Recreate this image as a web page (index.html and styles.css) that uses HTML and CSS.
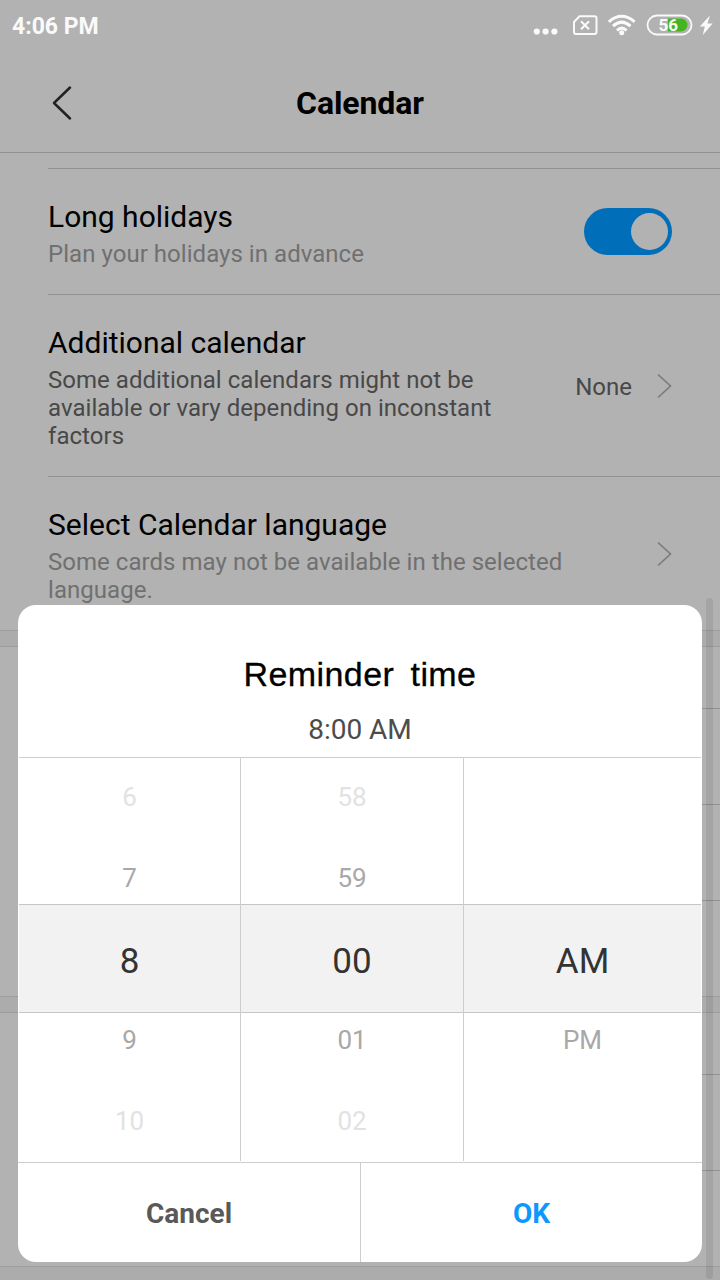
FILE: index.html
```html
<!DOCTYPE html>
<html lang="en">
<head>
<meta charset="utf-8">
<title>Calendar</title>
<link rel="stylesheet" href="styles.css">
</head>
<body>
<div class="screen">
  <header class="status">
    <span class="clock">4:06 PM</span>
    <svg class="status-icons" width="190" height="50" viewBox="0 0 190 50">
      <g fill="#fafafa">
        <circle cx="6.800" cy="31.500" r="3.100"/><circle cx="15.600" cy="31.500" r="3.100"/><circle cx="24.400" cy="31.500" r="3.100"/>
      </g>
      <g fill="none" stroke="#fafafa" stroke-width="2">
        <path d="M49.500 16.200H64.500q2 0 2 2V32q0 2-2 2H46q-2 0-2-2V22Z" stroke-linejoin="round"/>
        <path d="M51 21.200l8 8M59 21.200l-8 8"/>
      </g>
      <g fill="none" stroke="#fafafa" stroke-width="3">
        <path d="M78.800 21.800Q91.700 10.800 104.600 21.800"/>
        <path d="M83 26.200Q91.700 18 100.500 26.200"/>
        <path d="M87 30.500Q91.700 25.800 96.500 30.500"/>
      </g>
      <circle cx="91.700" cy="32.800" r="2.500" fill="#fafafa"/>
      <path d="M138 18.500h13a6.500 6.500 0 0 1 0 13h-13z" fill="#44b520"/>
      <rect x="117.500" y="15.500" width="44" height="19" rx="9.500" fill="none" stroke="#fafafa" stroke-width="1.800"/>
      <text class="battery-text" x="128.500" y="30.800" textLength="19.500" lengthAdjust="spacingAndGlyphs">56</text>
      <path d="M180 15.500L169.800 26.500h5l-2 8.500 9.800-11.500h-5.200z" fill="#fafafa"/>
    </svg>
  </header>
  <nav class="titlebar">
    <svg class="back" width="24" height="38" viewBox="0 0 24 38"><path d="M20 3.500L4 19l16 15.500" fill="none" stroke="#222" stroke-width="2.500" stroke-linecap="round" stroke-linejoin="round"/></svg>
    <h1 class="heading">Calendar</h1>
  </nav>
  <main class="list">
    <div class="row row-cut"></div>
    <div class="row">
      <div class="copy"><div class="name">Long holidays</div><div class="note">Plan your holidays in advance</div></div>
      <div class="toggle"><div class="knob"></div></div>
    </div>
    <div class="row">
      <div class="copy copy-narrow"><div class="name">Additional calendar</div><div class="note note-dark">Some additional calendars might not be available or vary depending on inconstant factors</div></div>
      <div class="value">None</div>
      <svg class="chevron" width="16" height="26" viewBox="0 0 16 26"><path d="M2 1.500L14.500 13 2 24.500" fill="none" stroke="#7a7a7a" stroke-width="1.600"/></svg>
    </div>
    <div class="row row-last">
      <div class="copy"><div class="name">Select Calendar language</div><div class="note">Some cards may not be available in the selected language.</div></div>
      <svg class="chevron" width="16" height="26" viewBox="0 0 16 26"><path d="M2 1.500L14.500 13 2 24.500" fill="none" stroke="#7a7a7a" stroke-width="1.600"/></svg>
    </div>
    <div class="divider"></div>
    <div class="row blank-first"></div>
    <div class="row blank"></div>
    <div class="row blank"></div>
    <div class="row blank row-last"></div>
    <div class="divider"></div>
    <div class="row blank-first"></div>
    <div class="row blank"></div>
    <div class="row blank row-last"></div>
    <div class="divider"></div>
  </main>
  <div class="scrollbar"></div>

  <section class="dialog">
    <div class="dialog-head">
      <h2 class="dialog-title">Reminder time</h2>
      <div class="dialog-time">8:00 AM</div>
    </div>
    <div class="picker">
      <div class="column">
        <div class="above"><span class="far">6</span><span class="near">7</span></div>
        <div class="chosen">8</div>
        <div class="below"><span class="near">9</span><span class="far">10</span></div>
      </div>
      <div class="column">
        <div class="above"><span class="far">58</span><span class="near">59</span></div>
        <div class="chosen">00</div>
        <div class="below"><span class="near">01</span><span class="far">02</span></div>
      </div>
      <div class="column">
        <div class="above"></div>
        <div class="chosen">AM</div>
        <div class="below"><span class="near">PM</span></div>
      </div>
    </div>
    <div class="actions">
      <div class="action">Cancel</div>
      <div class="action action-ok">OK</div>
    </div>
  </section>
</div>
</body>
</html>
```

FILE: styles.css
```css
* { box-sizing: border-box; }
body { margin: 0; font-family: Roboto, sans-serif; }
.screen { position: relative; width: 720px; height: 1280px; overflow: hidden; background: #b2b2b2; }

.status { height: 50px; display: flex; justify-content: space-between; padding-left: 12px; }
.clock { font-size: 23px; font-weight: 700; line-height: 54px; color: #fafafa; }
.battery-text { font: 700 17px Roboto, sans-serif; fill: #fafafa; }

.titlebar { display: grid; grid-template-columns: 150px 1fr 150px; align-items: center; height: 103px; border-bottom: 1px solid #929292; }
.back { margin-left: 50px; margin-top: 3px; }
.heading { margin: 3px 0 0; text-align: center; font-size: 32px; line-height: 38px; font-weight: 700; letter-spacing: -0.1px; color: #000; }

.row { display: flex; align-items: center; margin-left: 48px; padding: 28px 48px 28px 0; border-bottom: 1px solid #929292; }
.row-cut { height: 16px; padding: 0; }
.row-last { margin-left: 0; padding-left: 48px; border-bottom-color: #9d9d9d; }
.copy { flex: 1; display: flex; flex-direction: column; gap: 6px; padding-top: 2px; margin-bottom: -2px; }
.copy-narrow { flex: 0 0 460px; }
.name { font-size: 30px; line-height: 35px; color: #000; }
.note { font-size: 24px; line-height: 28px; letter-spacing: 0.04px; color: #707070; }
.note-dark { color: #484848; }
.value { flex: 1; text-align: right; padding-right: 24px; font-size: 24px; line-height: 28px; margin-top: 3px; color: #484848; }
.chevron { flex: none; margin-top: 1px; }
.toggle { width: 88px; height: 47px; margin-top: -1px; padding: 5px 4px; border-radius: 24px; background: #006eb9; display: flex; justify-content: flex-end; }
.knob { width: 37px; height: 37px; border-radius: 50%; background: #b2b2b2; }
.divider { height: 16px; background: #acacac; border-bottom: 1px solid #9d9d9d; }
.blank-first { height: 62px; padding: 0; }
.blank { height: 96px; padding: 0; }
.scrollbar { position: absolute; left: 706px; top: 598px; width: 7px; height: 681px; border-radius: 4px; background: rgba(0, 0, 0, 0.08); }

.dialog { position: absolute; left: 18px; top: 605px; width: 684px; height: 657px; border-radius: 18px; overflow: hidden; background: #fff; display: flex; flex-direction: column; }
.dialog-head { height: 152px; padding-top: 49px; text-align: center; }
.dialog-title { margin: 0; font: 400 34px/40px "Liberation Sans", Arial, sans-serif; letter-spacing: 0.4px; word-spacing: 6.5px; -webkit-text-stroke: 0.3px #000; color: #000; }
.dialog-time { margin-top: 19px; font-size: 28px; line-height: 34px; color: #4c4c4c; }
.picker { display: grid; grid-template-columns: 221px 223px 1fr; height: 404px; margin: 0 1px; border-top: 1px solid #cdcdcd; }
.column { display: flex; flex-direction: column; text-align: center; color: #333; }
.column + .column { border-left: 1px solid #cdcdcd; }
.above, .below { display: flex; flex-direction: column; gap: 49px; font-size: 26px; line-height: 32px; }
.above { height: 146px; padding-top: 23px; }
.below { padding-top: 11px; }
.chosen { height: 109px; border-top: 1px solid #c6c6c6; border-bottom: 1px solid #c6c6c6; background: #f2f2f2; font-size: 35px; line-height: 113px; }
.near { color: #a8a8a8; }
.far { color: #e2e2e2; }
.actions { display: grid; grid-template-columns: 342px 1fr; height: 100px; margin-top: 1px; border-top: 1px solid #cdcdcd; }
.action { text-align: center; font-size: 28px; font-weight: 700; line-height: 101px; color: #595959; }
.action-ok { border-left: 1px solid #cdcdcd; color: #0d99fb; }
```
